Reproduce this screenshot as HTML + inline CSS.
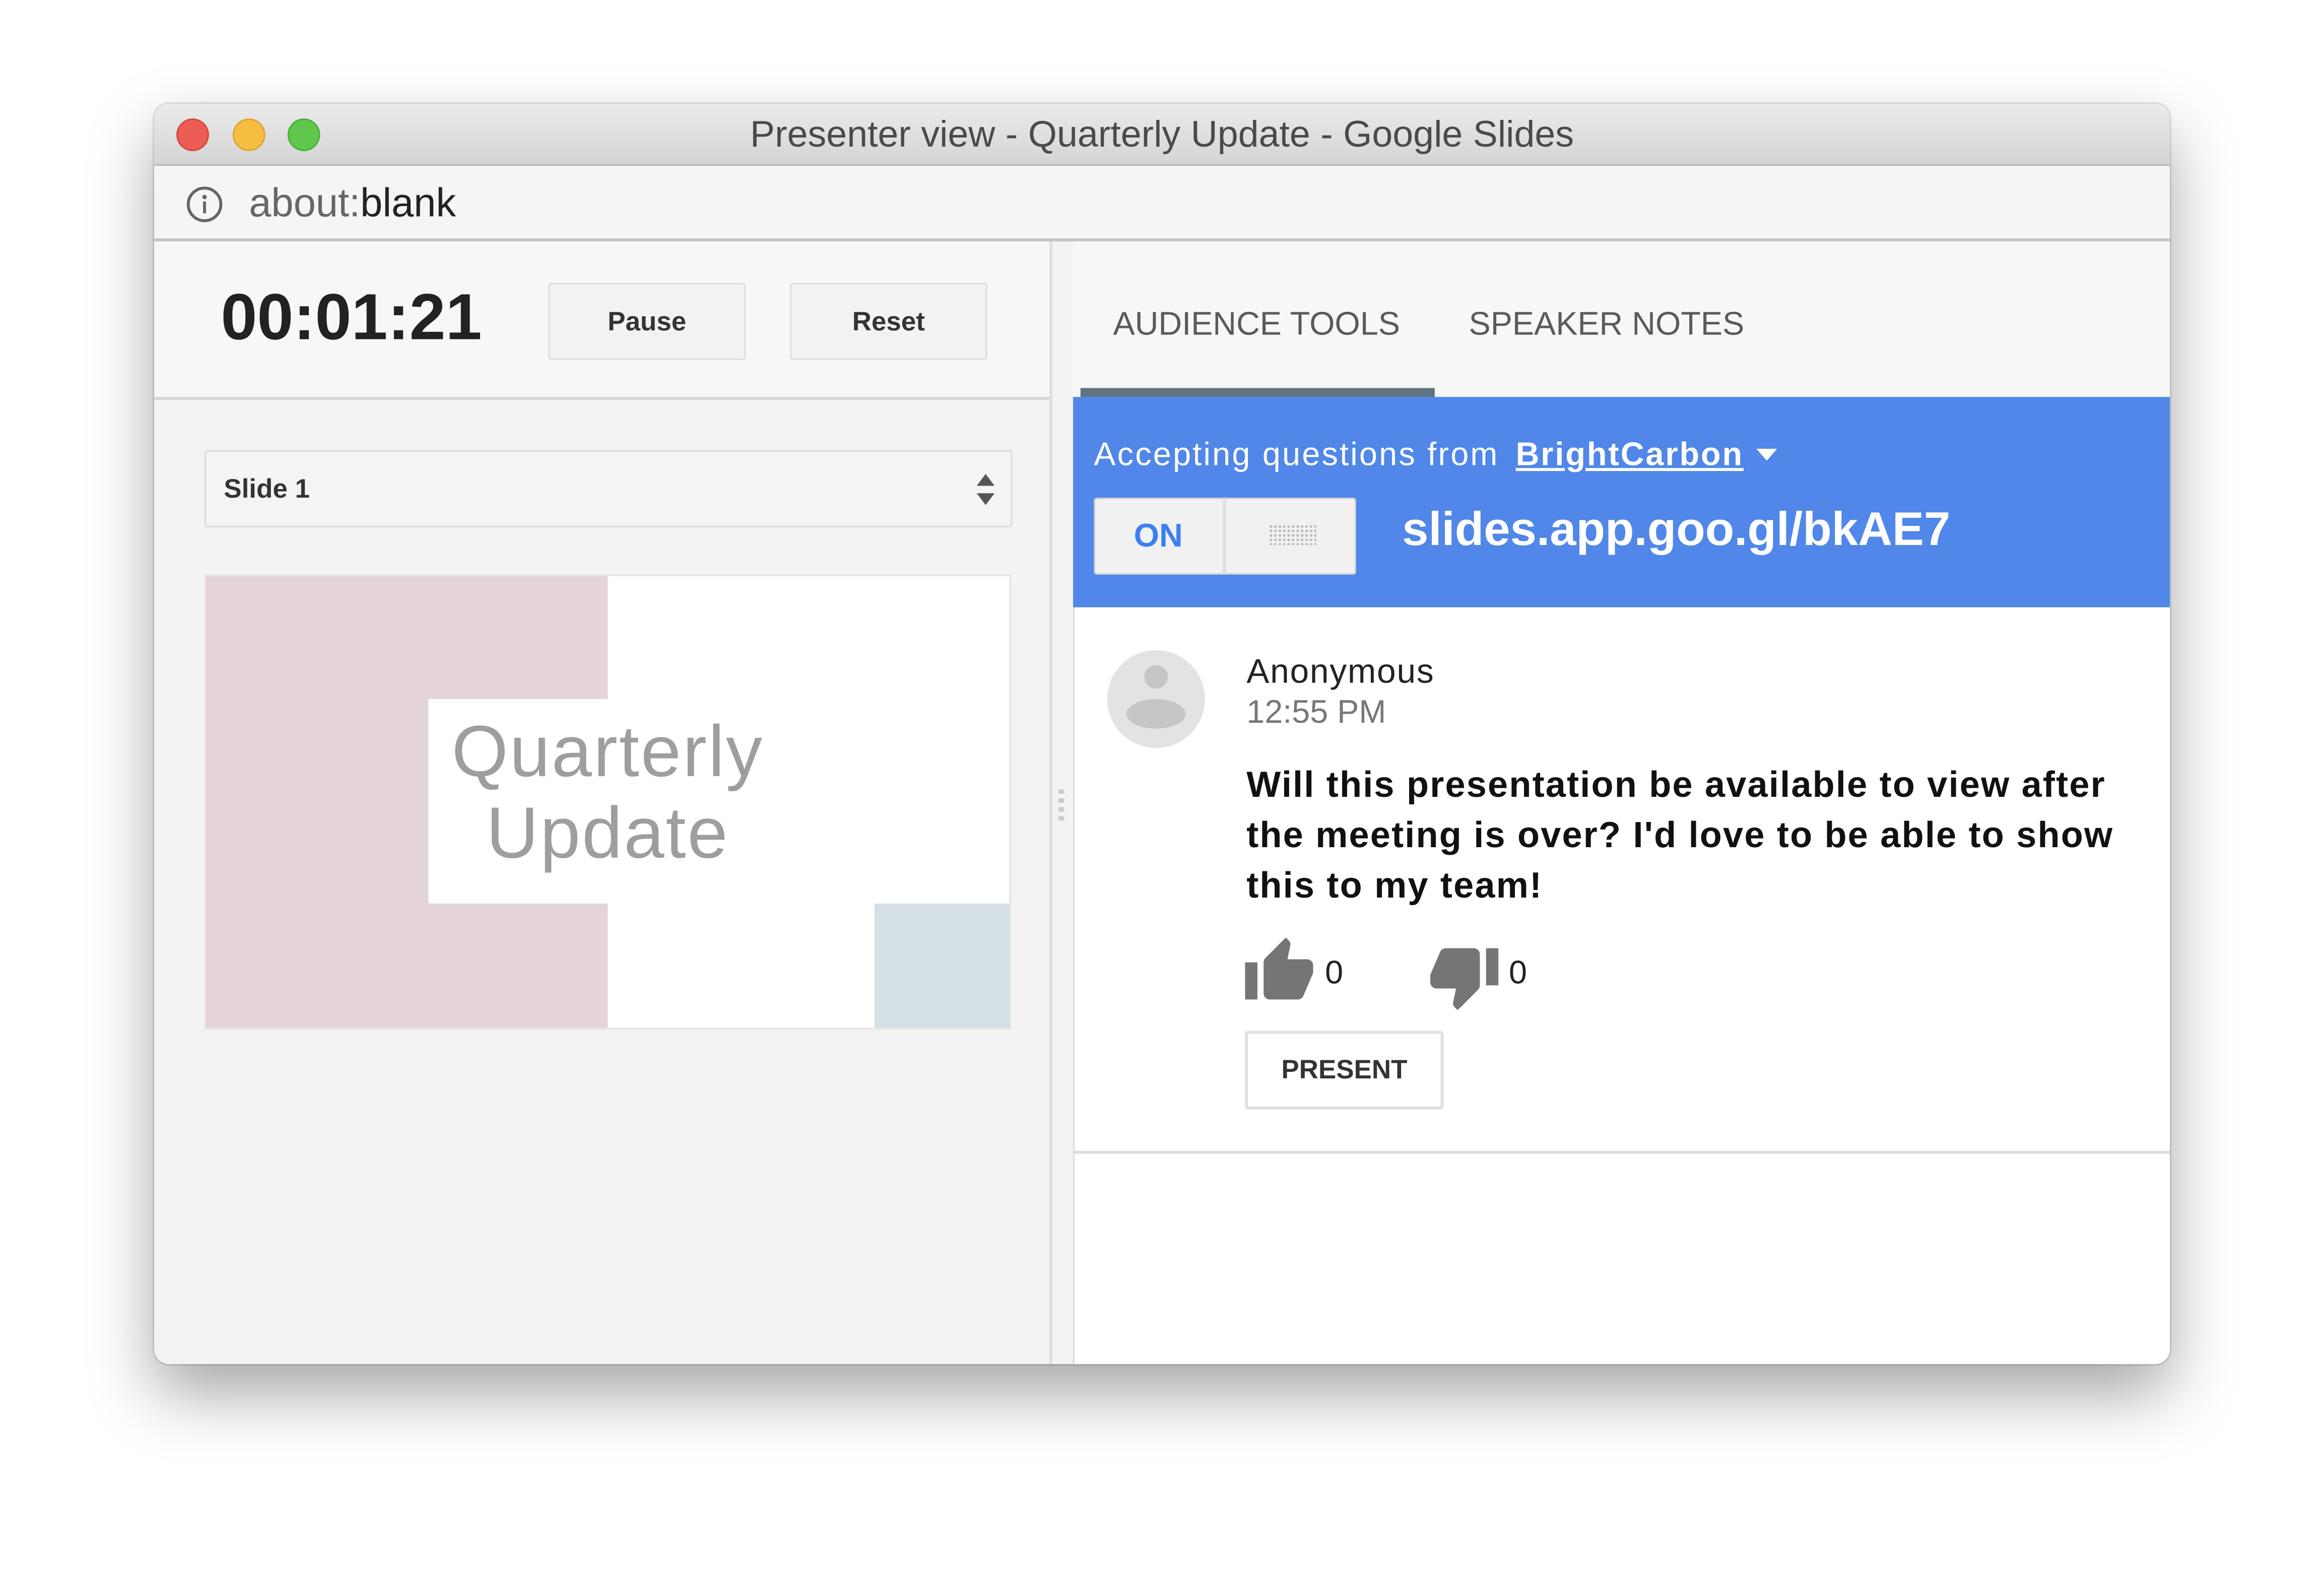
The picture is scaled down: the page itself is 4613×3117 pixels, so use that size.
<!DOCTYPE html>
<html><head><meta charset="utf-8"><style>
html,body{margin:0;padding:0;background:#fff;overflow:hidden}
body{width:4613px;height:3117px;position:relative}
#s{position:absolute;left:0;top:0;width:1568px;height:1060px;transform:scale(2.942,2.9406);transform-origin:0 0;font-family:"Liberation Sans",sans-serif}
.a{position:absolute}
.win{left:104px;top:70px;width:1360px;height:851px;border-radius:10px;overflow:hidden;box-shadow:0 20px 50px rgba(0,0,0,.35),0 0 0 1px rgba(0,0,0,.12);background:#f3f3f3}
.btn{background:#f2f2f2;border:1px solid #dcdcdc;border-radius:2px;box-sizing:border-box;font-weight:bold;font-size:18px;color:#333;text-align:center}
</style></head><body><div id="s">
<div class="a win">
 <div class="a" style="left:0;top:0;width:1360px;height:41px;background:linear-gradient(#ebebeb,#d4d4d4);border-bottom:1px solid #b5b5b5"></div>
 <div class="a" style="left:15px;top:10px;width:22px;height:22px;border-radius:50%;background:#ee5d55;border:1px solid #d5463f;box-sizing:border-box"></div>
 <div class="a" style="left:53px;top:10px;width:22px;height:22px;border-radius:50%;background:#f6be3f;border:1px solid #dca433;box-sizing:border-box"></div>
 <div class="a" style="left:90px;top:10px;width:22px;height:22px;border-radius:50%;background:#5fc84c;border:1px solid #4aaf39;box-sizing:border-box"></div>
 <div class="a" style="left:0;top:7px;width:1360px;text-align:center;font-size:25px;color:#4a4a4a;white-space:nowrap">Presenter view - Quarterly Update - Google Slides</div>
 <div class="a" style="left:0;top:42px;width:1360px;height:49px;background:#f4f5f7;border-bottom:2px solid #c4c4c4"></div>
 <svg class="a" style="left:21px;top:55px" width="26" height="26" viewBox="0 0 26 26"><circle cx="13" cy="13" r="11" fill="none" stroke="#666" stroke-width="2"/><circle cx="13" cy="8" r="1.5" fill="#666"/><rect x="12" y="11" width="2" height="8" fill="#666"/></svg>
 <div class="a" style="left:64px;top:52px;font-size:27px;color:#666">about:<span style="color:#222">blank</span></div>
 <!-- left panel -->
 <div class="a" style="left:0;top:93px;width:604px;height:105px;background:#f7f7f7;border-bottom:2px solid #d6d6d6"></div>
 <div class="a" style="left:45px;top:120px;font-size:44px;font-weight:bold;color:#222">00:01:21</div>
 <div class="a btn" style="left:266px;top:121px;width:133px;height:52px;line-height:50px">Pause</div>
 <div class="a btn" style="left:429px;top:121px;width:133px;height:52px;line-height:50px">Reset</div>
 <div class="a" style="left:34px;top:234px;width:545px;height:52px;border:1px solid #dadada;border-radius:2px;box-sizing:border-box;background:#f4f4f4;font-weight:bold;font-size:18px;color:#333;line-height:50px;padding-left:12px">Slide 1</div>
 <svg class="a" style="left:554px;top:249px" width="14" height="24" viewBox="0 0 14 24"><path d="M7 1L13 9H1z M1 14H13L7 22z" fill="#555"/></svg>
 <div class="a" style="left:34px;top:318px;width:542px;height:305px;background:#fff;border:1px solid #e2e2e2;overflow:hidden">
  <div class="a" style="left:0;top:0;width:271px;height:305px;background:#e5d3da"></div>
  <div class="a" style="left:451px;top:221px;width:91px;height:84px;background:#d5e0e5"></div>
  <div class="a" style="left:150px;top:83px;width:301px;height:138px;background:#fff"></div>
  <div class="a" style="left:120px;top:92px;width:302px;text-align:center;font-size:49px;line-height:55px;color:#9e9e9e;letter-spacing:1px">Quarterly<br>Update</div>
 </div>
 <div class="a" style="left:604px;top:93px;width:2px;height:758px;background:#dedede"></div>
 <div class="a" style="left:610px;top:463px;width:4px;height:22px;background:repeating-linear-gradient(#ccc 0 3px,transparent 3px 6px)"></div>
 <!-- right panel -->
 <div class="a" style="left:620px;top:93px;width:740px;height:758px;background:#fff;border-left:1px solid #dcdcdc"></div>
 <div class="a" style="left:620px;top:93px;width:740px;height:105px;background:#f7f7f7"></div>
 <div class="a" style="left:647px;top:136px;font-size:22px;color:#5a5a5a;white-space:nowrap">AUDIENCE TOOLS</div>
 <div class="a" style="left:887px;top:136px;font-size:22px;color:#5a5a5a;white-space:nowrap">SPEAKER NOTES</div>
 <div class="a" style="left:625px;top:192px;width:239px;height:6px;background:#5f7380"></div>
 <div class="a" style="left:620px;top:198px;width:740px;height:142px;background:#5087e9"></div>
 <div class="a" style="left:634px;top:224px;font-size:22px;color:#fff;letter-spacing:1.1px;white-space:nowrap">Accepting questions from <b style="text-decoration:underline;margin-left:4px;letter-spacing:1px">BrightCarbon</b></div>
 <svg class="a" style="left:1081px;top:232px" width="14" height="10"><path d="M0 1H14L7 9z" fill="#fff"/></svg>
 <div class="a" style="left:634px;top:266px;width:177px;height:52px;background:#f1f1f1;border:1px solid #d0d0d0;border-radius:2px;box-sizing:border-box"></div>
 <div class="a" style="left:634px;top:266px;width:89px;height:52px;line-height:52px;text-align:center;font-weight:bold;font-size:22px;color:#3d7ff0;border-right:2px solid #ddd;box-sizing:border-box">ON</div>
 <div class="a" style="left:752px;top:284px;width:32px;height:14px;background:radial-gradient(circle,#bbb 0.8px,transparent 1px) 0 0/3px 3px"></div>
 <div class="a" style="left:842px;top:269px;font-size:32px;font-weight:bold;color:#fff;white-space:nowrap">slides.app.goo.gl/bkAE7</div>
 <div class="a" style="left:620px;top:707px;width:740px;height:2px;background:#dcdcdc"></div>
 <svg class="a" style="left:643px;top:369px" width="66" height="66" viewBox="0 0 66 66"><circle cx="33" cy="33" r="33" fill="#e3e3e3"/><circle cx="33" cy="18" r="8" fill="#c6c6c6"/><ellipse cx="33" cy="43" rx="20" ry="10" fill="#c6c6c6"/></svg>
 <div class="a" style="left:737px;top:370px;font-size:23px;color:#222;letter-spacing:0.6px">Anonymous</div>
 <div class="a" style="left:737px;top:398px;font-size:22px;color:#777">12:55 PM</div>
 <div class="a" style="left:737px;top:444px;width:640px;font-size:24.5px;line-height:34px;font-weight:bold;color:#111;letter-spacing:0.75px;white-space:nowrap">Will this presentation be available to view after<br>the meeting is over? I'd love to be able to show<br>this to my team!</div>
 <svg class="a" style="left:736px;top:563px" width="46" height="46" viewBox="1 1 22 22"><path d="M1 21h4V9H1v12zm22-11c0-1.1-.9-2-2-2h-6.31l.95-4.57.03-.32c0-.41-.17-.79-.44-1.06L14.17 1 7.590 7.59C7.22 7.950 7 8.45 7 9v10c0 1.1.9 2 2 2h9c.83 0 1.54-.5 1.84-1.22l3.02-7.05c.09-.23.14-.47.14-.73v-2z" fill="#757575"/></svg>
 <div class="a" style="left:790px;top:574px;font-size:22px;color:#222">0</div>
 <svg class="a" style="left:861px;top:566px" width="46" height="46" viewBox="1 1 22 22"><path d="M15 3H6c-.83 0-1.54.5-1.840 1.22l-3.02 7.05c-.09.23-.14.47-.14.73v2c0 1.1.9 2 2 2h6.31l-.95 4.57-.03.32c0 .41.17.79.44 1.06L9.830 23l6.59-6.59c.36-.36.58-.86.58-1.41V5c0-1.1-.9-2-2-2zm4 0v12h4V3h-4z" fill="#757575"/></svg>
 <div class="a" style="left:914px;top:574px;font-size:22px;color:#222">0</div>
 <div class="a" style="left:736px;top:626px;width:134px;height:53px;border:2px solid #e0e0e0;border-radius:2px;box-sizing:border-box;background:#fff;text-align:center;line-height:49px;font-weight:bold;font-size:18px;color:#333">PRESENT</div>
</div>
</div></body></html>
